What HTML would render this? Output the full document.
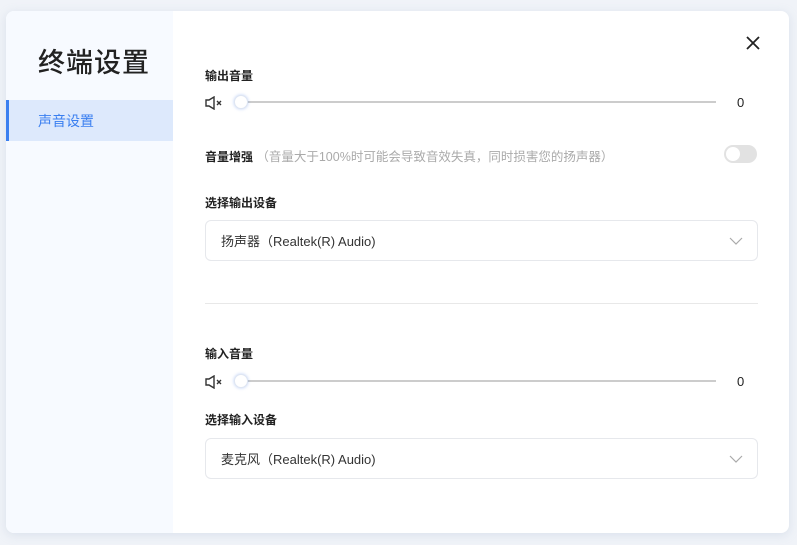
<!DOCTYPE html>
<html><head><meta charset="utf-8"><style>
body{margin:0;width:797px;height:545px;background:#f0f3f8;font-family:"Liberation Sans","Noto Sans CJK SC",sans-serif;position:relative;overflow:hidden}
.card{position:absolute;left:6px;top:11px;width:783px;height:522px;background:#fff;border-radius:8px;overflow:hidden;box-shadow:0 2px 10px rgba(150,170,200,.25)}
.side{position:absolute;left:0;top:0;width:167px;height:100%;background:#f7faff}
.title{position:absolute;left:32px;top:30px;font-size:27px;color:#222;letter-spacing:1px;font-weight:500}
.act{position:absolute;left:0;top:89px;width:167px;height:41px;background:#dde9fc}
.act:before{content:"";position:absolute;left:0;top:0;width:3px;height:41px;background:#3a7ff0}
.act span{position:absolute;left:32px;top:11px;font-size:14px;color:#3a7ff0}
.a{position:absolute;font-size:12px;color:#222}
.track{position:absolute;height:2px;background:#ccc}
.thumb{position:absolute;width:12px;height:12px;border-radius:50%;background:#fff;border:1px solid #dfe6f2;box-shadow:0 0 3px rgba(80,130,230,.4)}
.sel{position:absolute;left:199px;width:553px;height:41px;border:1px solid #e6e8ec;border-radius:6px;box-sizing:border-box}
.sel span{position:absolute;left:15px;top:10px;font-size:13px;color:#333}
.sel svg{position:absolute;right:14px;top:16px}
</style></head><body>
<div class="card">
<div class="side"><div class="title">终端设置</div><div class="act"><span>声音设置</span></div></div>
<svg style="position:absolute;left:740px;top:25px" width="14" height="14"><path d="M1 1L13 13M13 1L1 13" stroke="#222" stroke-width="1.8"/></svg>
<div class="a" style="left:199px;top:56px;font-weight:bold">输出音量</div>
<svg style="position:absolute;left:199px;top:85px" width="20" height="14"><path d="M1 4H4L9 1V13L4 10H1Z" fill="none" stroke="#333" stroke-width="1.4"/><path d="M12 5L16 9M16 5L12 9" stroke="#333" stroke-width="1.4"/></svg>
<div class="track" style="left:236px;top:90px;width:474px"></div>
<div class="thumb" style="left:228px;top:84px"></div>
<div class="a" style="left:731px;top:84px;font-size:13px">0</div>
<div class="a" style="left:199px;top:135px;font-weight:bold">音量增强 <span style="font-weight:normal;color:#aaa;font-size:12.5px">（音量大于100%时可能会导致音效失真，同时损害您的扬声器）</span></div>
<div style="position:absolute;left:718px;top:134px;width:33px;height:18px;border-radius:9px;background:#e2e2e2"><div style="position:absolute;left:2px;top:2px;width:14px;height:14px;border-radius:50%;background:#fff"></div></div>
<div class="a" style="left:199px;top:183px;font-weight:bold">选择输出设备</div>
<div class="sel" style="top:209px"><span>扬声器（Realtek(R) Audio)</span><svg width="14" height="8"><path d="M1 1L7 7L13 1" fill="none" stroke="#aaa" stroke-width="1.2"/></svg></div>
<div style="position:absolute;left:199px;top:292px;width:553px;height:1px;background:#e8e8e8"></div>
<div class="a" style="left:199px;top:334px;font-weight:bold">输入音量</div>
<svg style="position:absolute;left:199px;top:364px" width="20" height="14"><path d="M1 4H4L9 1V13L4 10H1Z" fill="none" stroke="#333" stroke-width="1.4"/><path d="M12 5L16 9M16 5L12 9" stroke="#333" stroke-width="1.4"/></svg>
<div class="track" style="left:236px;top:369px;width:474px"></div>
<div class="thumb" style="left:228px;top:363px"></div>
<div class="a" style="left:731px;top:363px;font-size:13px">0</div>
<div class="a" style="left:199px;top:400px;font-weight:bold">选择输入设备</div>
<div class="sel" style="top:427px"><span>麦克风（Realtek(R) Audio)</span><svg width="14" height="8"><path d="M1 1L7 7L13 1" fill="none" stroke="#aaa" stroke-width="1.2"/></svg></div>
</div>
</body></html>
